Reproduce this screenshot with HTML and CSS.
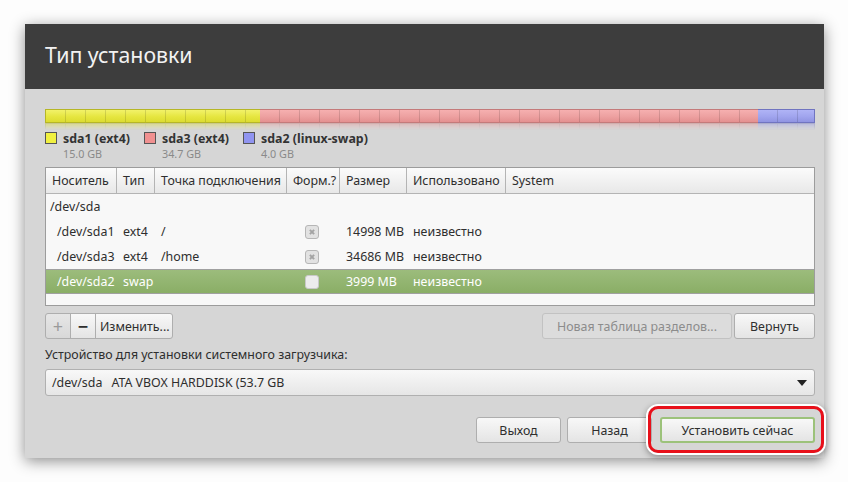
FILE: index.html
```html
<!DOCTYPE html>
<html lang="ru">
<head>
<meta charset="utf-8">
<link rel="stylesheet" href="styles.css">
</head>
<body>
<div class="window">
  <div class="titlebar"><h1 class="title">Тип установки</h1></div>
  <div class="content">
    <div class="pbar-wrap">
      <div class="pbar">
        <div class="seg seg-y" style="width:215px"></div>
        <div class="seg seg-p" style="width:498px"></div>
        <div class="seg seg-b" style="flex:1"></div>
      </div>
      <div class="pbar reflect">
        <div class="seg seg-y" style="width:215px"></div>
        <div class="seg seg-p" style="width:498px"></div>
        <div class="seg seg-b" style="flex:1"></div>
      </div>
    </div>
    <div class="legend">
      <div class="leg-item">
        <span class="swatch sw-y"></span>
        <div><div class="leg-name">sda1 (ext4)</div><div class="leg-size">15.0 GB</div></div>
      </div>
      <div class="leg-item">
        <span class="swatch sw-p"></span>
        <div><div class="leg-name">sda3 (ext4)</div><div class="leg-size">34.7 GB</div></div>
      </div>
      <div class="leg-item">
        <span class="swatch sw-b"></span>
        <div><div class="leg-name">sda2 (linux-swap)</div><div class="leg-size">4.0 GB</div></div>
      </div>
    </div>
    <div class="table">
      <div class="row head">
        <div class="hc">Носитель</div><div class="hc">Тип</div><div class="hc">Точка подключения</div><div class="hc">Форм.?</div><div class="hc">Размер</div><div class="hc">Использовано</div><div class="hc last">System</div>
      </div>
      <div class="row">
        <div class="c c-dev">/dev/sda</div><div class="c"></div><div class="c"></div><div class="c"></div><div class="c"></div><div class="c"></div><div class="c"></div>
      </div>
      <div class="row">
        <div class="c c-part">/dev/sda1</div><div class="c">ext4</div><div class="c">/</div><div class="c c-chk"><span class="chk x"></span></div><div class="c">14998 MB</div><div class="c">неизвестно</div><div class="c"></div>
      </div>
      <div class="row">
        <div class="c c-part">/dev/sda3</div><div class="c">ext4</div><div class="c">/home</div><div class="c c-chk"><span class="chk x"></span></div><div class="c">34686 MB</div><div class="c">неизвестно</div><div class="c"></div>
      </div>
      <div class="row sel">
        <div class="c c-part">/dev/sda2</div><div class="c">swap</div><div class="c"></div><div class="c c-chk"><span class="chk empty"></span></div><div class="c">3999 MB</div><div class="c">неизвестно</div><div class="c"></div>
      </div>
      <div class="filler"></div>
    </div>
    <div class="toolbar">
      <div class="btn-group">
        <button class="btn sq dis-sym">+</button><button class="btn sq">−</button><button class="btn edit">Изменить...</button>
      </div>
      <div class="spacer"></div>
      <button class="btn disabled">Новая таблица разделов...</button>
      <button class="btn revert">Вернуть</button>
    </div>
    <div class="label">Устройство для установки системного загрузчика:</div>
    <div class="combo"><span class="combo-dev">/dev/sda</span><span>ATA VBOX HARDDISK (53.7 GB</span><span class="arrow"></span></div>
    <div class="actions">
      <button class="btn act">Выход</button>
      <button class="btn act">Назад</button>
      <div class="install-wrap">
        <button class="btn act install">Установить сейчас</button>
        <span class="highlight"></span>
      </div>
    </div>
  </div>
</div>
</body>
</html>
```
FILE: styles.css
```css
* { box-sizing: border-box; }
html, body { margin: 0; padding: 0; }
body {
  width: 848px; height: 482px; overflow: hidden;
  background: #fdfdfd;
  font-family: "Noto Sans", "Open Sans", sans-serif;
  font-size: 12.4px; color: #2e2e2e;
  padding: 24px 0 0 25px;
}
.window {
  width: 799px; height: 434px;
  background: #d6d6d6;
  box-shadow: 0 3px 14px rgba(0,0,0,.45);
  display: flex; flex-direction: column;
}
.titlebar {
  height: 65px; background: #3d3d3d; flex: none;
  padding: 16px 0 0 20px;
}
.title {
  margin: 0; font-weight: normal; font-size: 21.3px; color: #f2f2f2;
}
.content { padding: 20px 9px 0 20px; display: flex; flex-direction: column; }
.pbar-wrap { height: 23px; flex: none; }
.pbar { display: flex; height: 14px; }
.seg {
  height: 100%;
  border-top: 1px solid; border-bottom: 1px solid;
  background-image: repeating-linear-gradient(90deg, transparent 0 19px, rgba(0,0,0,.13) 19px 20px), var(--g);
}
.seg-y { --g: linear-gradient(#f2f26a, #e6e640 55%, #dcdc30); border-color: #b6b626; border-left: 1px solid #b6b626; }
.seg-p { --g: linear-gradient(#f6b0b0, #eda0a0 55%, #e49090); border-color: #c47a7a; }
.seg-b { --g: linear-gradient(#b0b4f6, #a0a4ee 55%, #9094e2); border-color: #7074c0; border-right: 1px solid #7074c0; }
.reflect {
  height: 7px; transform: scaleY(-1); opacity: .45;
  -webkit-mask-image: linear-gradient(to top, #000, transparent);
  mask-image: linear-gradient(to top, #000, transparent);
}
.legend { display: flex; height: 35px; flex: none; }
.leg-item { display: flex; align-items: flex-start; }
.leg-item:first-child { width: 99px; }
.leg-item:nth-child(2) { width: 99px; }
.swatch { width: 12px; height: 12px; border: 1px solid #555; margin: 0 6px 0 0; flex: none; }
.sw-y { background: #f0f040; }
.sw-p { background: #f09090; }
.sw-b { background: #9094f0; }
.leg-name { font-weight: bold; color: #333; line-height: 13px; }
.leg-size { color: #8a8a8a; font-size: 10.8px; line-height: 18px; }
.table {
  width: 770px; height: 139px; border: 1px solid #9c9c9c; background: #f8f8f8;
  display: flex; flex-direction: column; flex: none;
}
.row {
  display: grid;
  grid-template-columns: 71px 38px 132px 53px 67px 99px 1fr;
  height: 25px; align-items: center; flex: none;
}
.row.head {
  height: 26px;
  background: linear-gradient(#fbfbfb, #e8e8e8);
  border-bottom: 1px solid #b4b4b4;
}
.hc { height: 100%; display: flex; align-items: center; padding-left: 6px; border-right: 1px solid #b4b4b4; white-space: nowrap; }
.hc.last { border-right: none; }
.c { padding-left: 6px; white-space: nowrap; }
.c-dev { padding-left: 4px; }
.c-part { padding-left: 11px; }
.c-chk { padding-left: 18px; display: flex; }
.chk {
  width: 14px; height: 14px; border-radius: 3px;
  border: 1px solid #b6b6b6; background: #e2e2e2; position: relative;
}
.chk.x::before, .chk.x::after {
  content: ""; position: absolute; left: 3px; top: 5px; width: 6px; height: 2px; background: #a4a4a4;
  transform: rotate(45deg);
}
.chk.x::after { transform: rotate(-45deg); }
.chk.empty { background: #ececec; border-color: #c8c8c8; }
.row.sel {
  background: linear-gradient(#9cbc7c, #8aae66);
  color: #fff;
  border-top: 1px solid #a0a0a0; border-bottom: 1px solid #a0a0a0;
}
.filler { flex: 1; }
.toolbar { display: flex; margin-top: 7px; height: 26px; flex: none; }
.btn-group { display: flex; }
.btn {
  font: inherit; color: #2e2e2e;
  height: 26px; padding: 0 8px;
  background: linear-gradient(#f8f8f8, #e4e4e4);
  border: 1px solid #aeaeae; border-radius: 3px;
}
.btn-group .btn { border-radius: 0; margin-left: -1px; }
.btn-group .btn:first-child { border-radius: 3px 0 0 3px; margin-left: 0; }
.btn-group .btn:last-child { border-radius: 0 3px 3px 0; }
.btn.sq { width: 26px; padding: 0; font-size: 18px; line-height: 1; font-weight: bold; }
.btn.edit { padding: 0 4px; width: 78px; }
.dis-sym { color: #9a9a9a; font-weight: normal !important; background: linear-gradient(#e6e6e6, #d8d8d8); }
.spacer { flex: 1; }
.btn.disabled { color: #8c8c8c; background: #dcdcdc; border-color: #c2c2c2; width: 190px; margin-right: 2px; }
.btn.revert { width: 81px; }
.label { margin-top: 6px; height: 20px; line-height: 20px; flex: none; }
.combo {
  margin-top: 4px; height: 27px; width: 770px; flex: none;
  background: linear-gradient(#f8f8f8, #e6e6e6);
  border: 1px solid #b0b0b0; border-radius: 3px;
  display: flex; align-items: center; padding-left: 6px; position: relative;
}
.combo-dev { margin-right: 9px; }
.arrow {
  position: absolute; right: 7px; top: 10px;
  width: 0; height: 0;
  border-left: 5px solid transparent; border-right: 5px solid transparent; border-top: 6px solid #222;
}
.actions { display: flex; justify-content: flex-end; margin-top: 21px; flex: none; }
.btn.act { width: 85px; margin-left: 6px; }
.install-wrap { position: relative; margin-left: 8px; }
.btn.install { width: 155px; margin-left: 0; border: 2px solid #9cc27a; }
.highlight {
  position: absolute; left: -12px; top: -11px; width: 176px; height: 47px;
  border: 3px solid #e8101a; border-radius: 10px;
  box-shadow: 0 0 0 2px #fff, 0 2px 6px 2px rgba(0,0,0,.35);
  pointer-events: none;
}
```
